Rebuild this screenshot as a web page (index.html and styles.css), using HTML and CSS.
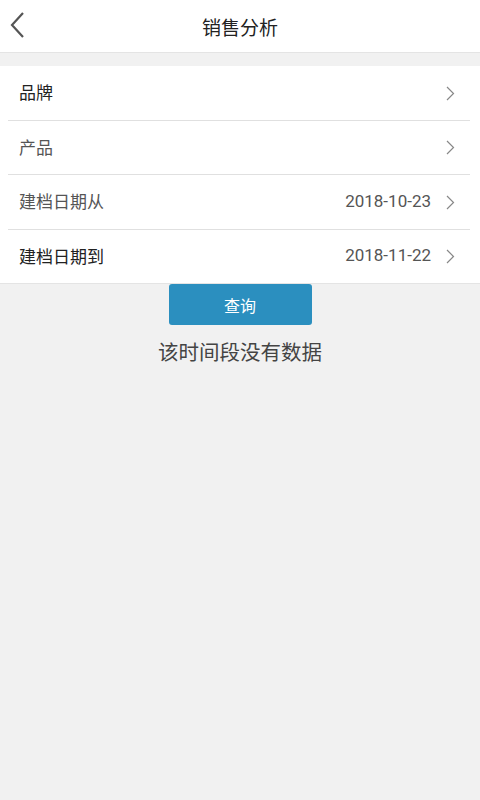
FILE: index.html
```html
<!DOCTYPE html>
<html lang="zh">
<head>
  <meta charset="UTF-8">
  <meta name="viewport" content="width=device-width, initial-scale=1.0">
  <title>销售分析</title>
  <link rel="stylesheet" href="styles.css">
</head>
<body>
  <div class="header">
    <a class="back">
      <svg width="16" height="26" viewBox="0 0 16 26"><path d="M13 1 L2 13 L13 25" fill="none" stroke="#555" stroke-width="2.2"/></svg>
    </a>
    <h1>销售分析</h1>
  </div>

  <div class="list">
    <div class="row">
      <span class="label dark">品牌</span>
      <span class="value"></span>
      <svg class="arrow" width="9" height="15" viewBox="0 0 9 15"><path d="M1 1 L7.5 7.5 L1 14" fill="none" stroke="#888" stroke-width="1.2"/></svg>
    </div>
    <div class="row">
      <span class="label">产品</span>
      <span class="value"></span>
      <svg class="arrow" width="9" height="15" viewBox="0 0 9 15"><path d="M1 1 L7.5 7.5 L1 14" fill="none" stroke="#888" stroke-width="1.2"/></svg>
    </div>
    <div class="row">
      <span class="label">建档日期从</span>
      <span class="value">2018-10-23</span>
      <svg class="arrow" width="9" height="15" viewBox="0 0 9 15"><path d="M1 1 L7.5 7.5 L1 14" fill="none" stroke="#888" stroke-width="1.2"/></svg>
    </div>
    <div class="row">
      <span class="label dark">建档日期到</span>
      <span class="value">2018-11-22</span>
      <svg class="arrow" width="9" height="15" viewBox="0 0 9 15"><path d="M1 1 L7.5 7.5 L1 14" fill="none" stroke="#888" stroke-width="1.2"/></svg>
    </div>
  </div>

  <div class="actions">
    <button class="btn">查询</button>
  </div>
  <p class="empty">该时间段没有数据</p>
</body>
</html>
```

FILE: styles.css
```css
body {
  margin: 0;
  background-color: #f1f1f1;
  font-family: Roboto, "Noto Sans CJK SC", sans-serif;
  color: #333;
  height: 800px;
}
.header {
  height: 52px;
  background-color: #fff;
  display: flex;
  align-items: center;
  justify-content: center;
  position: relative;
  border-bottom: 1px solid #e4e4e4;
}
.back {
  position: absolute;
  left: 10px;
  top: 12px;
  display: block;
}
.header h1 {
  margin: 0;
  font-size: 19px;
  font-weight: normal;
  color: #222;
}
.list {
  margin-top: 13px;
  background-color: #fff;
  padding-left: 8px;
  border-bottom: 1px solid #e4e4e4;
}
.row {
  height: 54.5px;
  display: flex;
  align-items: center;
  padding-left: 11px;
  padding-right: 25px;
  padding-bottom: 2px;
  margin-right: 10px;
  border-bottom: 1px solid #e0e0e0;
  box-sizing: border-box;
}
.row:last-child {
  border-bottom: none;
  height: 53.5px;
}
.label {
  font-size: 17px;
  color: #555;
  flex: 1;
}
.label.dark {
  color: #222;
}
.value {
  font-size: 17px;
  color: #555;
  margin-right: 15px;
}
.arrow {
  display: block;
  margin-right: -10px;
  margin-top: 3px;
}
.actions {
  display: flex;
  justify-content: center;
}
.btn {
  width: 143px;
  height: 41px;
  margin-top: 0;
  border: none;
  border-radius: 3px;
  background-color: #2b8fbf;
  color: #fff;
  font-family: Roboto, "Noto Sans CJK SC", sans-serif;
  font-size: 16px;
}
.empty {
  margin: 11px 0 0;
  text-align: center;
  font-size: 20.5px;
  color: #444;
}
```
